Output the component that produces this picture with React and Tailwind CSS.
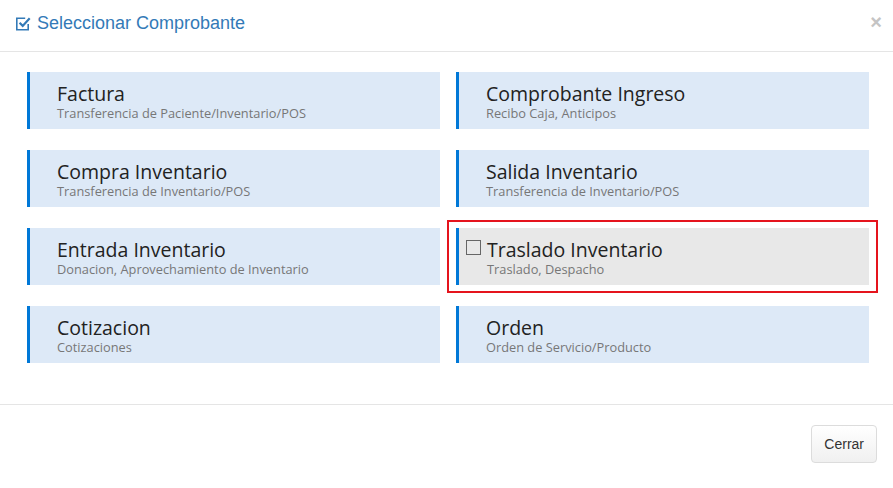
const tiles = [
  { title: 'Factura', sub: 'Transferencia de Paciente/Inventario/POS' },
  { title: 'Comprobante Ingreso', sub: 'Recibo Caja, Anticipos' },
  { title: 'Compra Inventario', sub: 'Transferencia de Inventario/POS' },
  { title: 'Salida Inventario', sub: 'Transferencia de Inventario/POS' },
  { title: 'Entrada Inventario', sub: 'Donacion, Aprovechamiento de Inventario' },
  { title: 'Traslado Inventario', sub: 'Traslado, Despacho', selected: true },
  { title: 'Cotizacion', sub: 'Cotizaciones' },
  { title: 'Orden', sub: 'Orden de Servicio/Producto' },
];

function CheckSquare() {
  return (
    <svg width="15" height="15" viewBox="0 0 15 15" className="shrink-0">
      <path d="M12.2 8v5.7h-11.4v-11.4h8.4" fill="none" stroke="#337ab7" strokeWidth="1.6" />
      <path d="M3.6 6.8l3.1 3.1 7-7.6" fill="none" stroke="#337ab7" strokeWidth="2.2" />
    </svg>
  );
}

function Tile({ title, sub, selected }) {
  const body = (
    <div className={`flex h-[57px] border-l-[3px] border-[#0078d7] pt-[10px] ${selected ? 'bg-[#e8e8e8] pl-[7px]' : 'bg-[#dde9f7] pl-[27px]'}`}>
      {selected && <div className="mt-[2px] mr-[6px] h-[15px] w-[15px] shrink-0 border border-[#666]"></div>}
      <div className="flex flex-col">
        <div className="text-[19.5px] leading-[24px] text-[#222]">{title}</div>
        <div className="text-[12.8px] leading-[15px] text-[#777]">{sub}</div>
      </div>
    </div>
  );
  if (selected) {
    return (
      <div className="-mx-[9px] -my-[8px] border-2 border-[#e5141d] px-[7px] py-[6px]">{body}</div>
    );
  }
  return body;
}

export default function App() {
  return (
    <div className="w-[893px] h-[488px] bg-white font-['Liberation_Sans',Arial,sans-serif]">
      <div className="flex h-[52px] items-center justify-between border-b border-[#e5e5e5] pb-[5px] pl-[16px] pr-[11px]">
        <div className="flex items-center gap-[6px]">
          <CheckSquare />
          <span className="text-[18px] text-[#337ab7]">Seleccionar Comprobante</span>
        </div>
        <span className="-mt-[3px] text-[20px] font-bold text-[#c4c4c4]">×</span>
      </div>
      <div className="grid grid-cols-2 gap-x-[16px] gap-y-[21px] pl-[27px] pr-[24px] pt-[20px] pb-[41px] font-['Segoe_UI','Open_Sans',sans-serif]">
        {tiles.map((t) => (
          <Tile key={t.title} {...t} />
        ))}
      </div>
      <div className="flex justify-end border-t border-[#e5e5e5] pr-[16px] pt-[20px]">
        <button className="h-[38px] rounded-[4px] border border-[#dcdcdc] bg-gradient-to-b from-white to-[#f0f0f0] px-[12px] text-[14px] text-[#333]">
          Cerrar
        </button>
      </div>
    </div>
  );
}
